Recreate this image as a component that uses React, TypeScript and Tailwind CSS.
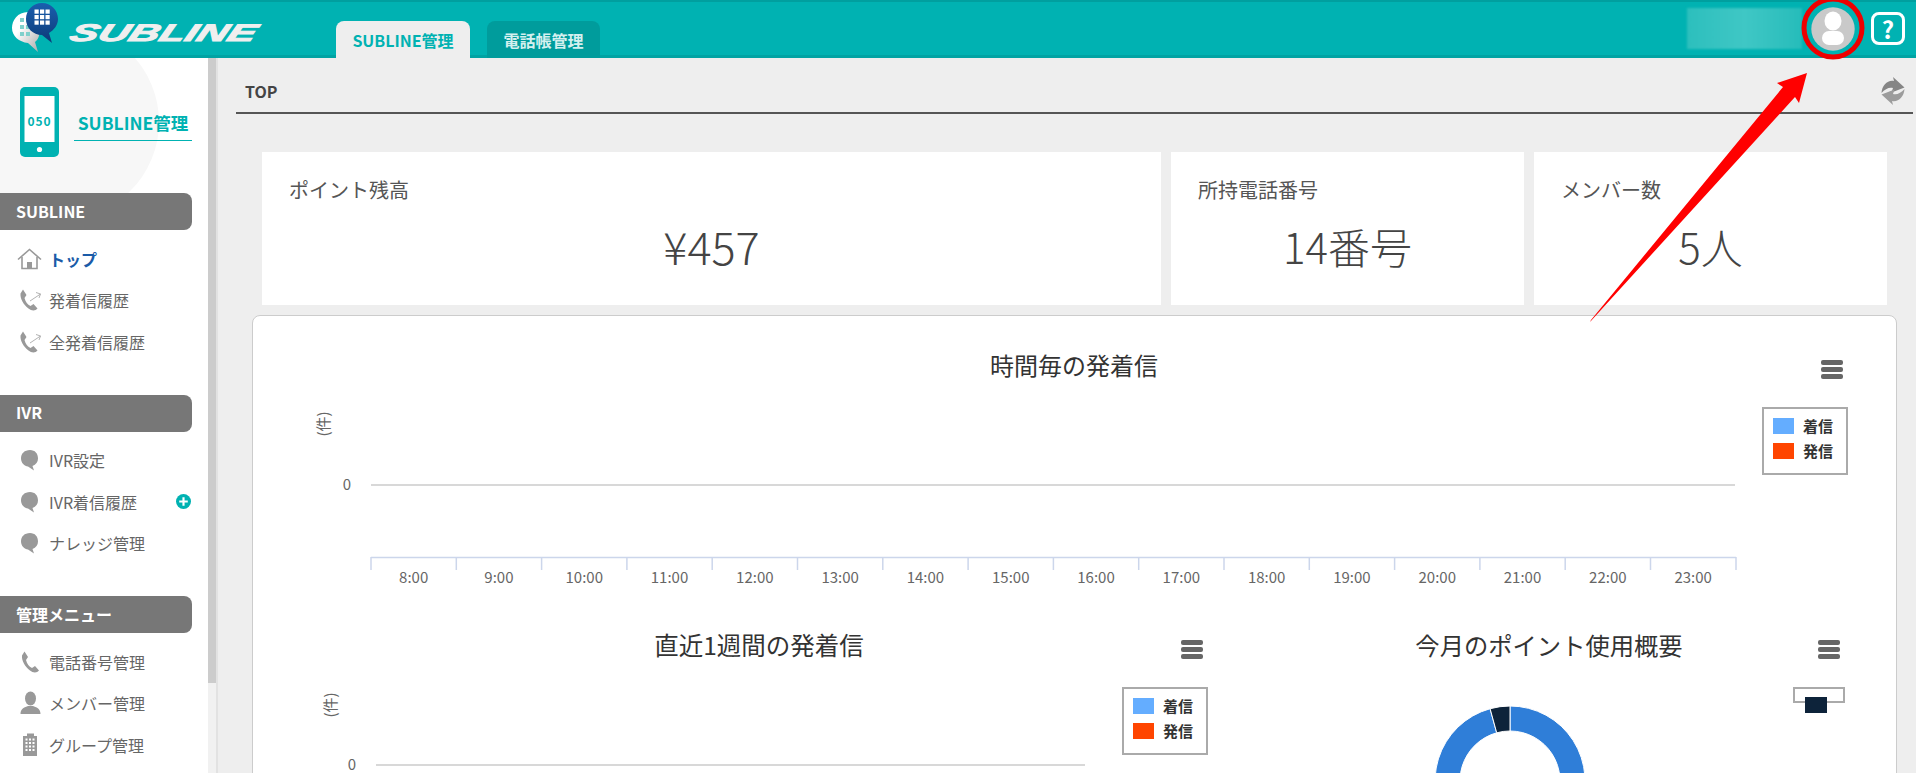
import React from "react";

const hours = Array.from({ length: 16 }, (_, i) => i + 8);

function MenuIcon({ x, y }: { x: number; y: number }) {
  return (
    <g fill="#666">
      <rect x={x - 11} y={y - 9} width={22} height={5} rx={2} />
      <rect x={x - 11} y={y - 2} width={22} height={5} rx={2} />
      <rect x={x - 11} y={y + 5} width={22} height={5} rx={2} />
    </g>
  );
}

function Legend({ x, y }: { x: number; y: number }) {
  return (
    <g>
      <rect x={x} y={y} width={84} height={66} fill="#fff" stroke="#aaa" strokeWidth={2} />
      <rect x={x + 10} y={y + 10} width={21} height={16} fill="#64adff" />
      <rect x={x + 10} y={y + 35} width={21} height={16} fill="#ff4500" />
      <text x={x + 40} y={y + 17} dominantBaseline="central" fontSize={15} fontWeight={700} fill="#333">着信</text>
      <text x={x + 40} y={y + 42} dominantBaseline="central" fontSize={15} fontWeight={700} fill="#333">発信</text>
    </g>
  );
}

function HourChart() {
  const step = 85.3;
  return (
    <svg viewBox="254 316 1642 304" className="block w-[1642px] h-[304px] shrink-0">
      <text x={1074} y={364.5} textAnchor="middle" dominantBaseline="central" fontSize={24} fill="#333">時間毎の発着信</text>
      <MenuIcon x={1832} y={369} />
      <text x={322} y={424} transform="rotate(-90 322 424)" textAnchor="middle" dominantBaseline="central" fontSize={15} fill="#666">(件)</text>
      <text x={347} y={483} textAnchor="middle" dominantBaseline="central" fontSize={15} fill="#666">0</text>
      <line x1={371} x2={1735} y1={485} y2={485} stroke="#d8d8d8" strokeWidth={2} />
      <line x1={371} x2={1736} y1={557.5} y2={557.5} stroke="#ccd6eb" strokeWidth={1.5} />
      {hours.map((h, i) => (
        <g key={h}>
          <line x1={371 + i * step} x2={371 + i * step} y1={557} y2={570} stroke="#ccd6eb" strokeWidth={1.5} />
          <text x={371 + (i + 0.5) * step} y={576.5} textAnchor="middle" dominantBaseline="central" fontSize={15} fill="#666">{h}:00</text>
        </g>
      ))}
      <line x1={1736} x2={1736} y1={557} y2={570} stroke="#ccd6eb" strokeWidth={1.5} />
      <Legend x={1763} y={408} />
    </svg>
  );
}

function WeekChart() {
  return (
    <svg viewBox="254 620 976 153" className="block w-[976px] h-[153px] shrink-0">
      <text x={759} y={644} textAnchor="middle" dominantBaseline="central" fontSize={24.5} fill="#333">直近1週間の発着信</text>
      <MenuIcon x={1192} y={649} />
      <text x={329} y={705} transform="rotate(-90 329 705)" textAnchor="middle" dominantBaseline="central" fontSize={15} fill="#666">(件)</text>
      <text x={352} y={763} textAnchor="middle" dominantBaseline="central" fontSize={15} fill="#666">0</text>
      <line x1={376} x2={1085} y1={765} y2={765} stroke="#d8d8d8" strokeWidth={2} />
      <Legend x={1123} y={688} />
    </svg>
  );
}

function PointChart() {
  return (
    <svg viewBox="1230 620 666 153" className="block w-[666px] h-[153px] shrink-0">
      <text x={1549} y={644} textAnchor="middle" dominantBaseline="central" fontSize={24.3} fill="#333">今月のポイント使用概要</text>
      <MenuIcon x={1829} y={649} />
      <path d="M1510 706 A75 75 0 1 1 1490.1 708.7 L1496.7 732.8 A50 50 0 1 0 1510 731 Z" fill="#2f7ed8" stroke="#fff" strokeWidth={1} />
      <path d="M1490.1 708.7 A75 75 0 0 1 1510 706 L1510 731 A50 50 0 0 0 1496.7 732.8 Z" fill="#0d233a" stroke="#fff" strokeWidth={1} />
      <rect x={1794} y={688} width={50} height={14} fill="#fff" stroke="#aaa" strokeWidth={2} />
      <rect x={1805} y={697} width={22} height={16} fill="#0d233a" />
    </svg>
  );
}

function Logo() {
  return (
    <svg viewBox="0 0 62 58" className="w-[62px] h-[58px] shrink-0">
      <defs>
        <linearGradient id="wb" x1="0" y1="0" x2="1" y2="1">
          <stop offset="0.35" stopColor="#ffffff" />
          <stop offset="1" stopColor="#a9a9a9" />
        </linearGradient>
        <linearGradient id="bb" x1="0" y1="0" x2="0" y2="1">
          <stop offset="0" stopColor="#1a5fae" />
          <stop offset="1" stopColor="#0d3a78" />
        </linearGradient>
      </defs>
      <path d="M30 12 C18 11 12 20 12 28 C12 36 19 42 28 43 L38 52 L35 42 C42 38 42 18 30 12 Z" fill="url(#wb)" />
      <g fill="#7fd0cc">
        <rect x="20" y="18" width="4" height="4" />
        <rect x="26" y="18" width="4" height="4" />
        <rect x="20" y="25" width="4" height="4" />
        <rect x="26" y="25" width="4" height="4" />
        <rect x="20" y="32" width="4" height="4" />
        <rect x="26" y="32" width="4" height="4" />
      </g>
      <path d="M42 3 C33 3 26 10 26 19 C26 28 33 35 42 35 L52 43 L49 33 C54 30 58 25 58 19 C58 10 51 3 42 3 Z" fill="url(#bb)" />
      <g fill="#fff">
        {[0, 1, 2].flatMap((r) =>
          [0, 1, 2].map((c) => <rect key={`${r}${c}`} x={34.5 + c * 5.5} y={9.5 + r * 5.5} width={4.2} height={4.2} />)
        )}
      </g>
    </svg>
  );
}

function Header() {
  return (
    <header className="h-[58px] shrink-0 flex items-end bg-[#00b2b2] border-t-2 border-b-[3px] border-t-[#009f9f] border-b-[#00a3a3]">
      <div className="w-[336px] h-full shrink-0 flex items-center">
        <Logo />
        <span className="block ml-[9px] mt-[8px] text-[24px] leading-none font-bold italic font-['Liberation_Sans',sans-serif] origin-left scale-x-[1.76] -skew-x-12 text-[#efefef] [-webkit-text-stroke:1px_#efefef]">
          SUBLINE
        </span>
      </div>
      <div className="relative -mb-[3px] w-[134px] h-[37px] rounded-t-lg bg-[#eeeeee] flex items-center justify-center text-[16px] font-bold text-[#00b2b2]">
        SUBLINE管理
      </div>
      <div className="relative -mb-[3px] ml-[17px] w-[113px] h-[37px] rounded-t-lg bg-[#009c9c] flex items-center justify-center text-[16px] font-bold text-[#d4f0ef]">
        電話帳管理
      </div>
      <div className="ml-auto h-full flex items-center pr-[11px]">
        <div className="w-[115px] h-[41px] blur-[1px] bg-linear-to-r from-[#2cbfbd] via-[#3fc7c5] to-[#25bcba]" />
        <svg viewBox="0 0 44 44" className="ml-[9px] w-[44px] h-[44px]">
          <circle cx="22" cy="22" r="21.7" fill="#c9c9c9" />
          <ellipse cx="22" cy="14" rx="8.5" ry="9.5" fill="#fff" />
          <rect x="11" y="24" width="22" height="14" rx="7" fill="#fff" />
        </svg>
        <div className="ml-[16px] w-[34px] h-[33px] rounded-lg border-[3px] border-white flex items-center justify-center text-[24px] font-bold text-white">
          ?
        </div>
      </div>
    </header>
  );
}

function HomeIcon() {
  return (
    <svg viewBox="0 0 25 22" className="w-[25px] h-[22px]" fill="none" stroke="#999" strokeWidth={1.6}>
      <path d="M1 11.5 L12.5 1.5 L24 11.5" />
      <path d="M5 9 V20.5 H20 V9" />
      <rect x="10" y="14" width="5" height="6.5" fill="#999" stroke="none" />
    </svg>
  );
}

const phonePath =
  "M5 1.5 L8.5 7 L6.5 10 C7.5 14 9.5 16.5 12.5 18 L15.5 16 L19.5 20.5 C17.5 23 13.5 23 10.5 20.5 C5.5 16.5 2 11 2.5 5.5 Z";

function CallIcon() {
  return (
    <svg viewBox="0 0 24 24" className="w-[24px] h-[24px]">
      <path d={phonePath} fill="#999" />
      <path d="M12 13 L22.5 6 M18 4.5 L22.5 6 L21 10" fill="none" stroke="#aaa" strokeWidth={0.9} />
    </svg>
  );
}

function BubbleIcon() {
  return (
    <svg viewBox="0 0 25 22" className="w-[25px] h-[22px]">
      <path d="M13 1 C7.5 1 4 4.5 4 9.5 C4 14 7.5 17 11 17.5 L17 21.5 L15.5 17 C19 15.5 21 13 21 9.5 C21 4.5 18 1 13 1 Z" fill="#999" />
    </svg>
  );
}

function PhoneIcon() {
  return (
    <svg viewBox="0 0 24 24" className="w-[24px] h-[24px]">
      <path d={phonePath} fill="#999" transform="translate(1.5 0)" />
    </svg>
  );
}

function PersonIcon() {
  return (
    <svg viewBox="0 0 24 24" className="w-[24px] h-[24px]">
      <ellipse cx="12.5" cy="7.5" rx="5.5" ry="7" fill="#999" />
      <path d="M2.5 23 C2.5 17 7 16.5 10 15 H15 C18 16.5 22.5 17 22.5 23 Z" fill="#999" />
    </svg>
  );
}

function BuildingIcon() {
  return (
    <svg viewBox="0 0 24 24" className="w-[24px] h-[24px]">
      <path d="M5 3 H9 V0.5 H16 V3 H19 V23 H5 Z" fill="#999" />
      <g fill="#fff">
        {[0, 1, 2, 3].flatMap((r) =>
          [0, 1, 2].map((c) => <rect key={`${r}${c}`} x={7.5 + c * 3.5} y={5.5 + r * 3.5} width={2} height={2} />)
        )}
      </g>
    </svg>
  );
}

function NavItem({ icon, label, active, plus }: { icon: React.ReactNode; label: string; active?: boolean; plus?: boolean }) {
  return (
    <div className="h-[41.5px] flex items-center pl-[17px] pr-[17px]">
      <span className="w-[25px] mr-[7px] flex justify-center shrink-0">{icon}</span>
      <span className={active ? "text-[16px] font-bold text-[#1a5ba8]" : "text-[16px] text-[#666666]"}>{label}</span>
      {plus && (
        <svg viewBox="0 0 14 14" className="ml-auto w-[15px] h-[15px]">
          <circle cx="7" cy="7" r="7" fill="#00b2b2" />
          <path d="M3 7 H11 M7 3 V11" stroke="#fff" strokeWidth={2} />
        </svg>
      )}
    </div>
  );
}

function NavSection({ title, className, children }: { title: string; className?: string; children: React.ReactNode }) {
  return (
    <section className={className}>
      <div className="w-[192px] h-[37px] pb-[2px] rounded-r-lg bg-[#777777] flex items-center pl-[16px] text-[16px] font-bold text-white">
        {title}
      </div>
      <div className="mt-[8px]">{children}</div>
    </section>
  );
}

function Sidebar() {
  return (
    <aside className="w-[208px] shrink-0 bg-white overflow-hidden">
      <div className="relative h-[135px] pl-[20px] pt-[29px] flex items-start overflow-hidden">
        <div className="absolute -left-[35px] -top-[33px] w-[194px] h-[194px] rounded-full bg-[#f7f7f7]" />
        <svg viewBox="0 0 39 70" className="relative w-[39px] h-[70px] shrink-0">
          <rect width="39" height="70" rx="5" fill="#00b2b2" />
          <rect x="4.5" y="9" width="30" height="46" fill="#fff" />
          <circle cx="19.5" cy="62.5" r="2.6" fill="#fff" />
          <text x="19.5" y="33" textAnchor="middle" dominantBaseline="central" fontSize={12} fontWeight={700} fill="#00b2b2" letterSpacing={1}>050</text>
        </svg>
        <div className="relative ml-[15px] mt-[24px] w-[118px] h-[30px] pb-[5px] border-b border-[#00b2b2] flex items-center justify-center text-[17.5px] whitespace-nowrap font-bold text-[#00b2b2]">
          SUBLINE管理
        </div>
      </div>
      <NavSection title="SUBLINE">
        <NavItem icon={<HomeIcon />} label="トップ" active />
        <NavItem icon={<CallIcon />} label="発着信履歴" />
        <NavItem icon={<CallIcon />} label="全発着信履歴" />
      </NavSection>
      <NavSection title="IVR" className="mt-[32px]">
        <NavItem icon={<BubbleIcon />} label="IVR設定" />
        <NavItem icon={<BubbleIcon />} label="IVR着信履歴" plus />
        <NavItem icon={<BubbleIcon />} label="ナレッジ管理" />
      </NavSection>
      <NavSection title="管理メニュー" className="mt-[32px]">
        <NavItem icon={<PhoneIcon />} label="電話番号管理" />
        <NavItem icon={<PersonIcon />} label="メンバー管理" />
        <NavItem icon={<BuildingIcon />} label="グループ管理" />
      </NavSection>
    </aside>
  );
}

function StatCard({ label, value, className, valueClass }: { label: string; value: string; className: string; valueClass: string }) {
  return (
    <div className={`${className} h-[153px] bg-white pl-[27px] pt-[23px]`}>
      <div className="text-[20px] leading-[30px] text-[#555555]">{label}</div>
      <div className={`${valueClass} mt-[17px] -ml-[27px] text-center leading-[48px] font-light text-[#444444]`}>{value}</div>
    </div>
  );
}

function RefreshIcon() {
  return (
    <svg viewBox="0 0 24 28" className="w-[24px] h-[28px] blur-[0.4px]">
      <path d="M0.5 16 C1 8 7 2.5 13 4 L12 0 L23.5 10.5 L10.5 15.5 L12 11 C8 10 4 12 0.5 16 Z" fill="#858585" />
      <path d="M23.5 12 C23 20 17 25.5 11 24 L12 28 L0.5 17.5 L13.5 12.5 L12 17 C16 18 20 16 23.5 12 Z" fill="#9c9c9c" />
    </svg>
  );
}

function Main() {
  return (
    <main className="flex-1 min-w-0 bg-[#eeeeee]">
      <div className="ml-[18px] mr-[3px] h-[56px] pt-[12px] pl-[9px] pr-[8px] border-b-2 border-[#555555] flex items-center justify-between">
        <span className="text-[16px] font-bold text-[#444444]">TOP</span>
        <RefreshIcon />
      </div>
      <div className="mt-[38px] ml-[44px] flex gap-[10px]">
        <StatCard className="w-[899px]" valueClass="text-[45px]" label="ポイント残高" value="¥457" />
        <StatCard className="w-[353px]" valueClass="text-[42px]" label="所持電話番号" value="14番号" />
        <StatCard className="w-[353px]" valueClass="text-[42px]" label="メンバー数" value="5人" />
      </div>
      <div className="mt-[10px] ml-[34px] w-[1645px] pl-[1px] rounded-t-lg border border-[#cccccc] bg-white">
        <HourChart />
        <div className="flex">
          <WeekChart />
          <PointChart />
        </div>
      </div>
    </main>
  );
}

export default function App() {
  return (
    <div className="relative w-[1916px] h-[773px] overflow-hidden flex flex-col font-['Noto_Sans_CJK_JP','Noto_Sans',sans-serif]">
      <Header />
      <div className="flex-1 min-h-0 flex">
        <Sidebar />
        <div className="w-[10px] shrink-0 bg-[#f1f1f1] border-r-2 border-[#e2e2e2]">
          <div className="h-[625px] bg-[#cccccc]" />
        </div>
        <Main />
      </div>
      {/* annotation drawn over the screenshot */}
      <svg viewBox="0 0 1916 773" className="absolute inset-0 w-[1916px] h-[773px] pointer-events-none">
        <circle cx="1833" cy="28" r="29" fill="none" stroke="#ee0000" strokeWidth={5} />
        <path d="M1590 322 L1591 320 L1783 87 L1777 83 L1807 73 L1799 103 L1795 97 Z" fill="#ff0000" />
      </svg>
    </div>
  );
}
